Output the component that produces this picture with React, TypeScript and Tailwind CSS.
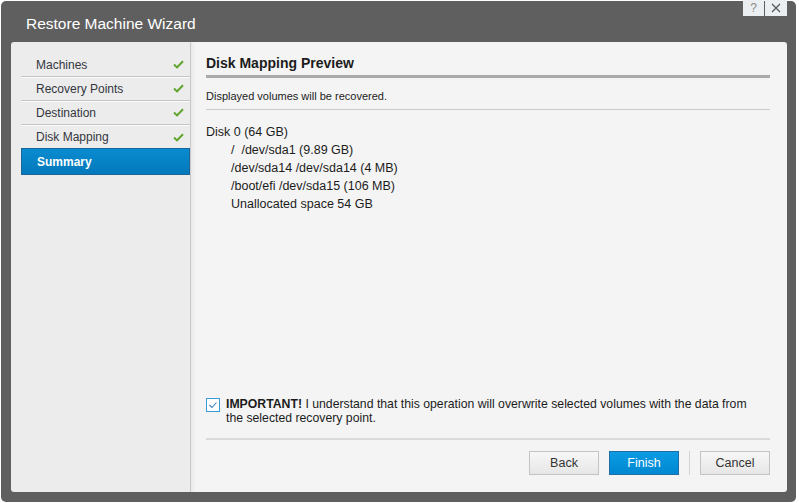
import React from "react";

const steps = ["Machines", "Recovery Points", "Destination", "Disk Mapping"];

const volumes = [
    "/  /dev/sda1 (9.89 GB)",
    "/dev/sda14 /dev/sda14 (4 MB)",
    "/boot/efi /dev/sda15 (106 MB)",
    "Unallocated space 54 GB",
];

const Check: React.FC = () => (
    <svg width="11" height="9" viewBox="0 0 11 9" className="shrink-0">
        <path d="M1 4.6 L4 7.4 L10 1.2" fill="none" stroke="#5fa52b" strokeWidth="2" />
    </svg>
);

const App: React.FC = () => {
    return (
        <div className="w-[799px] h-[503px] bg-white pt-px pl-px font-['Liberation_Sans',Arial,sans-serif]">
            <div className="relative w-[795px] h-[501px] rounded-[5px] bg-[#5f5f5f] flex flex-col">
                {/* Help / close */}
                <div className="absolute top-[-1px] left-[742px] flex gap-px">
                    <div className="w-[21px] h-[16px] bg-[#eceff2] flex items-center justify-center text-[12px] leading-none text-[#8a8a8a]">?</div>
                    <div className="w-[22px] h-[16px] bg-[#eceff2] flex items-center justify-center">
                        <svg width="10" height="10" viewBox="0 0 10 10">
                            <path d="M1 1 L9 9 M9 1 L1 9" stroke="#555" strokeWidth="1.2" />
                        </svg>
                    </div>
                </div>

                {/* Title */}
                <div className="h-[41px] pl-[25px] pt-[15px]">
                    <h1 className="text-[15.5px] leading-[16px] text-white">Restore Machine Wizard</h1>
                </div>

                {/* Panel */}
                <div className="ml-[10px] w-[776px] h-[450px] rounded-[3px] overflow-hidden flex">
                    {/* Steps */}
                    <div className="w-[180px] bg-[#ececec] border-r border-[#c9c9c9] pl-[10px] pt-[11px] shadow-[2px_0_4px_rgba(0,0,0,0.06)] z-10">
                        {steps.map((s, i) => (
                            <div
                                key={s}
                                className={`h-[24px] flex items-center justify-between pl-[15px] pr-[6px] text-[12px] text-[#33363d] ${i < 3 ? "border-b border-[#c6c6c6] shadow-[0_1px_0_#fafafa]" : ""}`}
                            >
                                <span>{s}</span>
                                <Check />
                            </div>
                        ))}
                        <div className="h-[27px] -mt-px flex items-center pl-[15px] bg-gradient-to-b from-[#0a8bd0] to-[#0479bb] border border-[#18669a] text-[12px] font-bold text-white">
                            Summary
                        </div>
                    </div>

                    {/* Content */}
                    <div className="flex-1 bg-[#f4f4f4] pl-[15px] pr-[17px] pt-[13px] pb-[17px] flex flex-col text-[#1c1c1c]">
                        <h2 className="text-[14px] leading-[16px] font-bold">Disk Mapping Preview</h2>
                        <div className="mt-[4px] h-[3px] bg-[#a9a9a9]" />
                        <p className="mt-[11px] text-[11px] leading-[14px]">Displayed volumes will be recovered.</p>
                        <div className="mt-[6px] h-px bg-[#cacaca]" />

                        <div className="mt-[13px] text-[12.5px] leading-[18px]">
                            <div>Disk 0 (64 GB)</div>
                            {volumes.map((v) => (
                                <div key={v} className="pl-[25px] whitespace-pre">{v}</div>
                            ))}
                        </div>

                        <div className="flex-1" />

                        <label className="flex items-start gap-[6px] text-[12.25px] leading-[14px]">
                            <span className="mt-px w-[14px] h-[14px] shrink-0 border border-[#3a9ad6] bg-white flex items-center justify-center">
                                <svg width="10" height="8" viewBox="0 0 10 8">
                                    <path d="M1.5 4 L4 6.5 L8.5 1.5" fill="none" stroke="#3a82c4" strokeWidth="1.1" />
                                </svg>
                            </span>
                            <span>
                                <b>IMPORTANT!</b> I understand that this operation will overwrite selected volumes with the data from
                                <br />
                                the selected recovery point.
                            </span>
                        </label>

                        <div className="mt-[13px] h-[2px] bg-[#dadada]" />

                        <div className="mt-[11px] flex justify-end items-stretch h-[24px] text-[12.5px]">
                            <button className="w-[70px] border border-[#c3c3c3] bg-gradient-to-b from-[#f7f7f7] to-[#e6e6e6] text-[#333]">
                                Back
                            </button>
                            <button className="ml-[10px] w-[70px] border border-[#1f6fa6] bg-gradient-to-b from-[#0b9be2] to-[#0088d2] text-white">
                                Finish
                            </button>
                            <div className="mx-[10px] w-px bg-[#d4d4d4]" />
                            <button className="w-[70px] border border-[#c3c3c3] bg-gradient-to-b from-[#f7f7f7] to-[#e6e6e6] text-[#333]">
                                Cancel
                            </button>
                        </div>
                    </div>
                </div>
            </div>
        </div>
    );
};

export default App;
